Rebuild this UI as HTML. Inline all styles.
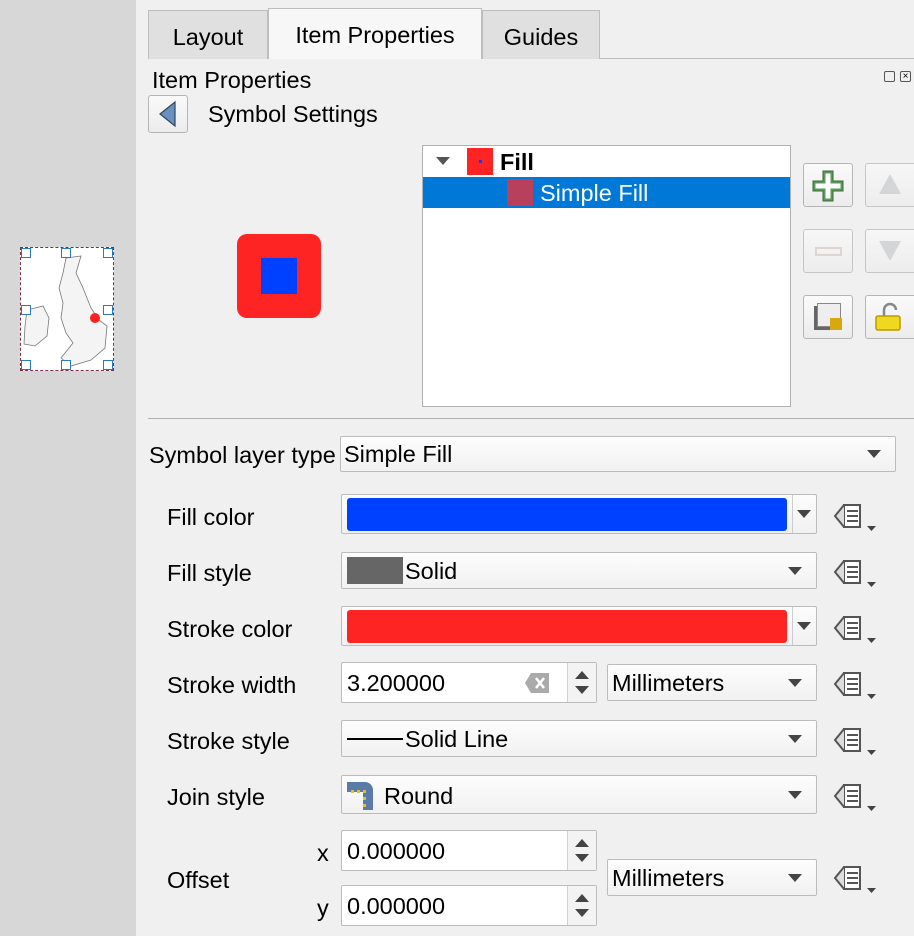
<!DOCTYPE html>
<html><head><style>
*{box-sizing:border-box;margin:0;padding:0}
body{width:914px;height:936px;overflow:hidden;background:#f0f0f0;font-family:"Liberation Sans",sans-serif;font-size:23.5px;color:#000;position:relative}
.a{position:absolute}
.side{left:0;top:0;width:136px;height:936px;background:#d7d7d7}
.tab{top:10px;height:49px;border:1px solid #bdbdbd;border-bottom:none;background:#e0e0e0;text-align:center;line-height:52px}
.btn{border:1px solid #b5b5b5;border-radius:3px;background:linear-gradient(#fafafa,#ececec)}
.combo{border:1px solid #bcbcbc;border-radius:2px;background:linear-gradient(#fdfdfd,#f1f1f1);line-height:36px;padding-left:4px}
.arr{position:absolute;right:14px;top:50%;margin-top:-4px;width:0;height:0;border-left:7px solid transparent;border-right:7px solid transparent;border-top:8px solid #444}
.lbl{left:167px}
.spin{background:#fff;border:1px solid #bcbcbc;border-radius:2px;padding-left:5px;line-height:40px}
.sb{position:absolute;right:0;top:0;bottom:0;width:29px;border-left:1px solid #d0d0d0;background:#f3f3f3}
.sb:before{content:"";position:absolute;left:7px;top:8px;border-left:7px solid transparent;border-right:7px solid transparent;border-bottom:8px solid #444}
.sb:after{content:"";position:absolute;left:7px;bottom:8px;border-left:7px solid transparent;border-right:7px solid transparent;border-top:8px solid #444}
</style></head><body>
<div class="a side"></div>
<div class="a" style="left:20px;top:247px;width:94px;height:124px;background:#fff;border:1px dashed #7a2a4a">
<svg width="92" height="122" style="position:absolute;left:0;top:0"><path d="M45 10 L60 8 L55 25 L62 40 L70 60 L78 72 L86 78 L84 100 L70 112 L50 118 L40 110 L52 95 L45 85 L40 70 L42 55 L38 40 L42 25 Z" fill="#f4f4f4" stroke="#777" stroke-width="0.8"/><path d="M6 62 L22 58 L28 70 L26 88 L14 98 L3 96 L4 78 Z" fill="#f4f4f4" stroke="#777" stroke-width="0.8"/><circle cx="74" cy="70" r="5" fill="#ff2020"/></svg>
<div class="a" style="left:0;top:0;width:10px;height:10px;border:1px solid #2a7ac0;background:#fff"></div>
<div class="a" style="left:40px;top:0;width:10px;height:10px;border:1px solid #2a7ac0;background:#fff"></div>
<div class="a" style="left:82px;top:0;width:10px;height:10px;border:1px solid #2a7ac0;background:#fff"></div>
<div class="a" style="left:0;top:57px;width:10px;height:10px;border:1px solid #2a7ac0;background:#fff"></div>
<div class="a" style="left:82px;top:57px;width:10px;height:10px;border:1px solid #2a7ac0;background:#fff"></div>
<div class="a" style="left:0;top:112px;width:10px;height:10px;border:1px solid #2a7ac0;background:#fff"></div>
<div class="a" style="left:40px;top:112px;width:10px;height:10px;border:1px solid #2a7ac0;background:#fff"></div>
<div class="a" style="left:82px;top:112px;width:10px;height:10px;border:1px solid #2a7ac0;background:#fff"></div>
</div>

<div class="a" style="left:148px;top:58px;width:766px;height:1px;background:#bdbdbd"></div>
<div class="a tab" style="left:148px;width:120px">Layout</div>
<div class="a tab" style="left:268px;top:8px;height:51px;width:214px;background:#f7f7f7">Item Properties</div>
<div class="a tab" style="left:482px;width:118px">Guides</div>

<div class="a" style="left:152px;top:67px">Item Properties</div>
<div class="a" style="left:884px;top:71px;width:11px;height:11px;border:1px solid #555;border-radius:2px;font-size:8px"></div>
<div class="a" style="left:900px;top:71px;width:11px;height:11px;border:1px solid #555;border-radius:2px;font-size:10px;line-height:9px;text-align:center">×</div>
<div class="a btn" style="left:148px;top:95px;width:40px;height:38px"><svg width="38" height="36"><path d="M11 18 L26 6 L26 30 Z" fill="#6890c0" stroke="#345" stroke-width="1.2"/></svg></div>
<div class="a" style="left:208px;top:101px">Symbol Settings</div>

<div class="a" style="left:237px;top:234px;width:84px;height:84px;background:#ff2424;border-radius:10px"></div>
<div class="a" style="left:261px;top:258px;width:36px;height:36px;background:#0040ff"></div>

<div class="a" style="left:422px;top:145px;width:369px;height:262px;background:#fff;border:1px solid #b0b0b0"></div>
<div class="a" style="left:436px;top:157px;border-left:7px solid transparent;border-right:7px solid transparent;border-top:8px solid #555"></div>
<div class="a" style="left:467px;top:148px;width:26px;height:27px;background:#ff2424"><div class="a" style="left:12px;top:12px;width:3px;height:3px;background:#0040ff"></div></div>
<div class="a" style="left:500px;top:149px;font-weight:bold">Fill</div>
<div class="a" style="left:423px;top:177px;width:367px;height:31px;background:#0078d7"></div>
<div class="a" style="left:507px;top:179px;width:26px;height:27px;background:#b8405c"></div>
<div class="a" style="left:540px;top:180px;color:#fff">Simple Fill</div>

<div class="a btn" style="left:803px;top:163px;width:50px;height:44px"><svg width="48" height="42"><path d="M19 7h10v10h10v10h-10v10h-10v-10h-10v-10h10z" fill="#5a9a5a" stroke="#3a6a3a"/><path d="M21.5 9.5h5v10h10v5h-10v10h-5v-10h-10v-5h10z" fill="#fff"/></svg></div>
<div class="a btn" style="left:865px;top:163px;width:60px;height:44px;opacity:.7"><svg width="48" height="42"><path d="M24 10 L35 30 L13 30 Z" fill="#c8cacc"/></svg></div>
<div class="a btn" style="left:803px;top:229px;width:50px;height:44px;opacity:.7"><div class="a" style="left:11px;top:17px;width:27px;height:9px;border:2px solid #d8c8c8"></div></div>
<div class="a btn" style="left:865px;top:229px;width:60px;height:44px;opacity:.7"><svg width="48" height="42"><path d="M13 11 L35 11 L24 31 Z" fill="#c8cacc"/></svg></div>
<div class="a btn" style="left:803px;top:295px;width:50px;height:44px"><div class="a" style="left:10px;top:10px;width:24px;height:24px;background:#666"></div><div class="a" style="left:13px;top:7px;width:24px;height:24px;background:#eee;border:1px solid #888"></div><div class="a" style="left:26px;top:22px;width:12px;height:12px;background:#d8a810"></div></div>
<div class="a btn" style="left:865px;top:295px;width:60px;height:44px"><svg width="48" height="42"><path d="M18 20 v-6 a6 6 0 0 1 12 0" fill="none" stroke="#888" stroke-width="2.5"/><rect x="10" y="20" width="24" height="14" rx="2" fill="#f0d820" stroke="#b89a00" stroke-width="1.5"/></svg></div>

<div class="a" style="left:148px;top:418px;width:766px;height:1px;background:#b0b0b0"></div>
<div class="a" style="left:149px;top:442px">Symbol layer type</div>
<div class="a combo" style="left:340px;top:436px;width:556px;height:36px;padding-left:3px;line-height:35px">Simple Fill<span class="arr"></span></div>

<div class="a lbl" style="top:504px">Fill color</div>
<div class="a lbl" style="top:560px">Fill style</div>
<div class="a lbl" style="top:616px">Stroke color</div>
<div class="a lbl" style="top:672px">Stroke width</div>
<div class="a lbl" style="top:728px">Stroke style</div>
<div class="a lbl" style="top:784px">Join style</div>
<div class="a lbl" style="top:867px">Offset</div>
<div class="a" style="left:317px;top:840px">x</div>
<div class="a" style="left:317px;top:895px">y</div>

<div class="a combo" style="left:341px;top:494px;width:476px;height:40px;padding:0"><div class="a" style="left:5px;top:3px;width:440px;height:33px;background:#0040ff;border-radius:3px"></div><div class="a" style="left:450px;top:0;width:1px;height:38px;background:#ccc"></div><span class="arr" style="right:5px"></span></div>
<div class="a combo" style="left:341px;top:552px;width:476px;height:37px"><span class="a" style="left:5px;top:4px;width:56px;height:27px;background:#666"></span><span style="margin-left:59px">Solid</span><span class="arr"></span></div>
<div class="a combo" style="left:341px;top:606px;width:476px;height:40px;padding:0"><div class="a" style="left:5px;top:3px;width:440px;height:33px;background:#ff2424;border-radius:3px"></div><div class="a" style="left:450px;top:0;width:1px;height:38px;background:#ccc"></div><span class="arr" style="right:5px"></span></div>
<div class="a spin" style="left:341px;top:662px;width:256px;height:41px">3.200000<svg class="a" style="left:182px;top:9px" width="26" height="22"><path d="M7 1h18v20h-18l-6-10z" fill="#aaa"/><path d="M12 6l8 10M20 6l-8 10" stroke="#fff" stroke-width="2.5"/></svg><span class="sb"></span></div>
<div class="a combo" style="left:607px;top:664px;width:210px;height:37px">Millimeters<span class="arr"></span></div>
<div class="a combo" style="left:341px;top:720px;width:476px;height:37px"><span class="a" style="left:5px;top:17px;width:56px;height:2px;background:#000"></span><span style="margin-left:59px">Solid Line</span><span class="arr"></span></div>
<div class="a combo" style="left:341px;top:775px;width:476px;height:39px;line-height:40px"><svg class="a" style="left:5px;top:6px" width="26" height="28"><path d="M0 0h18a8 8 0 0 1 8 8v20h-10v-18h-16z" fill="#5a7aa8"/><rect x="4" y="8" width="3" height="3" fill="#e0c030"/><rect x="10" y="8" width="3" height="3" fill="#e0c030"/><rect x="16" y="8" width="3" height="3" fill="#e0c030"/><rect x="16" y="15" width="3" height="3" fill="#e0c030"/><rect x="16" y="22" width="3" height="3" fill="#e0c030"/></svg><span style="margin-left:38px">Round</span><span class="arr"></span></div>
<div class="a spin" style="left:341px;top:830px;width:256px;height:41px">0.000000<span class="sb"></span></div>
<div class="a spin" style="left:341px;top:885px;width:256px;height:41px">0.000000<span class="sb"></span></div>
<div class="a combo" style="left:607px;top:859px;width:210px;height:37px">Millimeters<span class="arr"></span></div>

<svg class="a" style="left:830px;top:500px" width="52" height="400">
<g id="dd"><path d="M14 5h16v22h-16z" fill="#fff" stroke="#555" stroke-width="2"/><path d="M14 5l-9 11l9 11" fill="#ddd" stroke="#555" stroke-width="2"/><path d="M17 11h11M17 16h11M17 21h11" stroke="#555" stroke-width="2"/><path d="M37 26h9l-4.5 5z" fill="#444"/></g>
<use href="#dd" y="56"/><use href="#dd" y="112"/><use href="#dd" y="168"/><use href="#dd" y="224"/><use href="#dd" y="280"/><use href="#dd" y="362"/>
</svg>
</body></html>
